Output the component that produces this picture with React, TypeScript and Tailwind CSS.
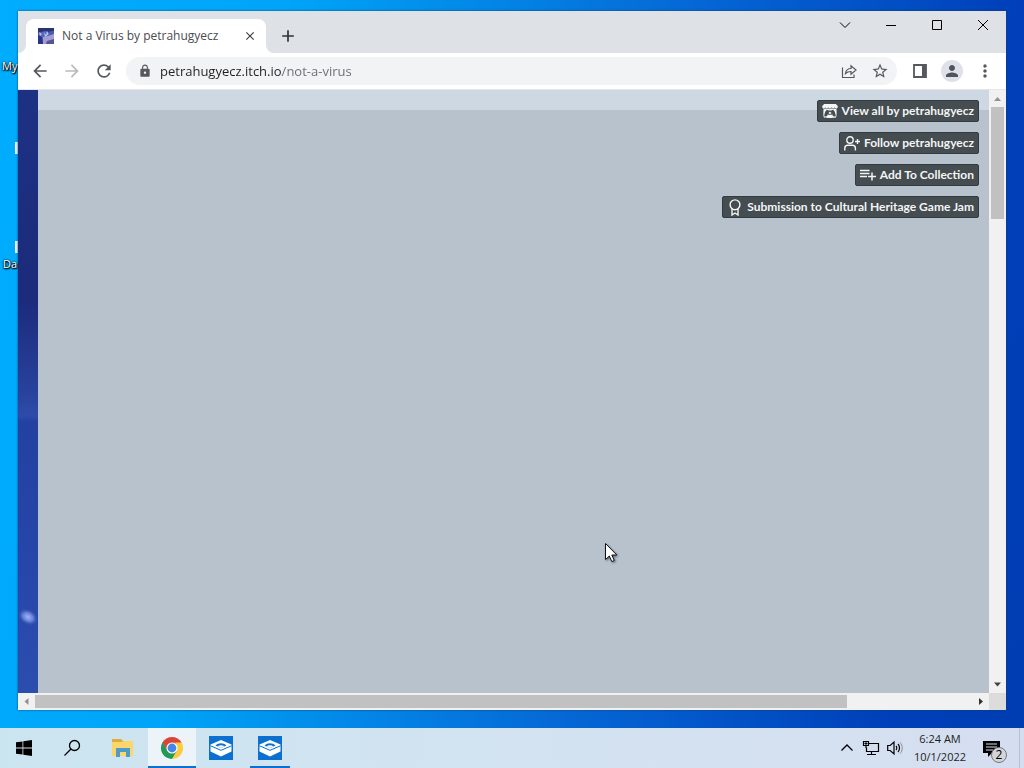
import type { ReactNode } from "react";
import { FaItchIo } from "react-icons/fa";
import { MdLock, MdStarBorder, MdMoreVert, MdPerson, MdArrowBack, MdArrowForward, MdRefresh, MdClose, MdAdd } from "react-icons/md";

const uiFont = "font-['Open_Sans','Noto_Sans',sans-serif]";

function FollowIcon() {
  return (
    <svg viewBox="0 0 16 15" className="h-[15px] w-4" fill="none" stroke="currentColor" strokeWidth="1.4" aria-hidden="true">
      <circle cx="6" cy="4" r="3.200" />
      <path d="M.8 14.500v-2.200c0-1.900 1.200-3 3-3h4.600c1.800 0 3 1.100 3 3v2.200M13.500 3v5M11 5.500h5" />
    </svg>
  );
}

function CollectIcon() {
  return (
    <svg viewBox="0 0 16 14" className="h-[14px] w-4" fill="none" stroke="currentColor" strokeWidth="1.500" aria-hidden="true">
      <path d="M0 2.500h9.500M0 5.500h9.500M0 8.500h7M12 4.500v8M8 8.500h8" />
    </svg>
  );
}

function RibbonIcon() {
  return (
    <svg viewBox="0 0 16 17" className="h-[17px] w-4" fill="none" stroke="currentColor" strokeWidth="1.400" aria-hidden="true">
      <circle cx="8" cy="5.800" r="4.900" />
      <path d="M5 9.800v6.200l3-2 3 2V9.800" />
    </svg>
  );
}

const pageActions: { label: string; icon: ReactNode }[] = [
  { label: "View all by petrahugyecz", icon: <FaItchIo size={16} /> },
  { label: "Follow petrahugyecz", icon: <FollowIcon /> },
  { label: "Add To Collection", icon: <CollectIcon /> },
  { label: "Submission to Cultural Heritage Game Jam", icon: <RibbonIcon /> },
];

function WindowButton({ label, children }: { label: string; children: ReactNode }) {
  return (
    <button aria-label={label} className="flex h-7 w-[46px] items-center justify-center text-black">
      <svg viewBox="0 0 12 12" className="size-3" fill="none" stroke="currentColor" aria-hidden="true">
        {children}
      </svg>
    </button>
  );
}

function TitleBar() {
  return (
    <header className="flex h-[42px] shrink-0 items-end justify-between bg-[#dee1e6]">
      <div className="flex h-full min-w-0 items-end">
        <div className="relative ml-2 flex h-[34px] w-[240px] items-center rounded-t-lg bg-white pl-3">
          <svg viewBox="0 0 8 8" className="absolute bottom-0 -left-2 size-2" aria-hidden="true">
            <path d="M0 8a8 8 0 0 0 8-8v8z" fill="white" />
          </svg>
          <svg viewBox="0 0 8 8" className="absolute -right-2 bottom-0 size-2" aria-hidden="true">
            <path d="M8 8a8 8 0 0 1-8-8v8z" fill="white" />
          </svg>
          <svg viewBox="0 0 16 16" className="size-4 shrink-0" aria-hidden="true">
            <path d="M0 0h16v16H0z" fill="#5d62b4" />
            <path d="M0 0h16v3l-5 1-4-1-7 2z" fill="#2a3474" />
            <path d="M0 7l4 2 1 7H0z" fill="#26358a" />
            <path d="M5 9l5-1 6-2v5l-6 5H5z" fill="#a59bd1" />
            <path d="M1 4l3 2-2 2zM6 4l2 3 1-4 2 3-4 3z" fill="#a5c8f5" />
            <path d="M10 4l5-1v3l-4 1z" fill="#4a5aa8" />
            <path d="M9 13l7-2v5H8z" fill="#535695" />
          </svg>
          <button role="tab" aria-selected="true" className="ml-2 flex-1 whitespace-nowrap text-left text-xs text-[#494c50]">
            Not a Virus by petrahugyecz
          </button>
          <button aria-label="Close tab" className="mr-2 flex size-4 items-center justify-center text-[#3c4043]">
            <MdClose size={14} />
          </button>
        </div>
        <button aria-label="New tab" className="ml-3 flex h-[34px] w-5 items-center justify-center text-[#303236]">
          <MdAdd size={20} />
        </button>
      </div>
      <div className="flex self-start">
        <WindowButton label="Search tabs"><path d="M1 3.500l5 5 5-5" /></WindowButton>
        <WindowButton label="Minimize"><path d="M1 6.500h10" /></WindowButton>
        <WindowButton label="Maximize"><path d="M1.500 1.500h9v9h-9z" /></WindowButton>
        <WindowButton label="Close window"><path d="M1 1l10 10M11 1L1 11" /></WindowButton>
      </div>
    </header>
  );
}

function ToolBar() {
  return (
    <nav className="flex h-[37px] shrink-0 items-center border-b border-[#e4e6e9] bg-white pr-[11px] pl-3 text-[#55585c]">
      <div className="flex gap-3">
        <button aria-label="Back"><MdArrowBack size={20} /></button>
        <button aria-label="Forward" className="text-[#b9bbbe]"><MdArrowForward size={20} /></button>
        <button aria-label="Reload"><MdRefresh size={20} /></button>
      </div>
      <div className="ml-3 flex h-7 flex-1 items-center rounded-full bg-[#f1f3f4] px-2">
        <MdLock size={14} className="mr-2 ml-1 shrink-0" />
        <input
          aria-label="Address"
          defaultValue="petrahugyecz.itch.io/not-a-virus"
          className="h-6 min-w-0 flex-1 bg-[linear-gradient(to_right,#202124_122px,#686b70_122px)] bg-clip-text text-[13px] text-transparent outline-none"
        />
        <button aria-label="Share this page">
          <svg viewBox="0 0 16 16" className="size-4" fill="none" stroke="currentColor" strokeWidth="1.200" aria-hidden="true">
            <path d="M1.500 4.500v10h11.500v-3M4.500 10.500c.5-3.500 2.500-5 5.500-5V2.800L15 7l-5 4.200V8.500C7.500 8.500 6 9 4.500 10.500z" />
          </svg>
        </button>
        <button aria-label="Bookmark this tab" className="ml-[14px]"><MdStarBorder size={18} /></button>
      </div>
      <button aria-label="Side panel" className="ml-4">
        <svg viewBox="0 0 14 14" className="h-[14px] w-[14px]" aria-hidden="true">
          <path d="M1 1h12v12H1z" fill="none" stroke="currentColor" strokeWidth="1.800" />
          <path d="M9 1h4v12H9z" fill="currentColor" />
        </svg>
      </button>
      <button aria-label="Profile" className="ml-[14px] flex size-[22px] items-center justify-center rounded-full bg-[#dfe1e8] text-[#50535e]">
        <MdPerson size={18} />
      </button>
      <button aria-label="Menu" className="ml-3"><MdMoreVert size={20} /></button>
    </nav>
  );
}

function Arrow({ d, color }: { d: string; color: string }) {
  return (
    <svg viewBox="0 0 17 17" className="size-[17px] shrink-0" aria-hidden="true">
      <path d={d} fill={color} />
    </svg>
  );
}

function PageView() {
  return (
    <div className="grid min-h-0 flex-1 grid-cols-[1fr_17px] grid-rows-[1fr_17px] bg-[#f1f1f1]">
      <main className="flex min-h-0 bg-[#b7c2cd]">
        <div className="flex w-5 shrink-0 flex-col bg-[linear-gradient(#1d3182,#1c2b7c_35%,#28429c_50%,#2f4ba9_54%,#2341a0_55%,#2746aa_80%,#2b4eae)]">
          <svg viewBox="0 0 20 40" className="mt-auto mb-14 h-10 w-5" aria-hidden="true">
            <defs>
              <radialGradient id="glow">
                <stop offset="0" stopColor="#a3b6fa" />
                <stop offset="0.500" stopColor="#7690e2" stopOpacity="0.800" />
                <stop offset="1" stopColor="#2746aa" stopOpacity="0" />
              </radialGradient>
            </defs>
            <ellipse cx="10" cy="20" rx="11" ry="8" fill="url(#glow)" transform="rotate(30 10 20)" />
          </svg>
        </div>
        <div className="flex-1 bg-[linear-gradient(#cdd8e3_20px,#b7c2cd_20px)]">
          <ul className="flex flex-col items-end gap-[10px] p-[10px]">
            {pageActions.map((action) => (
              <li key={action.label}>
                <a
                  href="#"
                  className="flex h-[22px] items-center gap-1 rounded-xs border border-[#303b42] bg-[#454d51] px-1 font-['Lato',sans-serif] text-xs font-bold whitespace-nowrap text-[#f3f5f6]"
                >
                  {action.icon}
                  {action.label}
                </a>
              </li>
            ))}
          </ul>
        </div>
      </main>
      <div className="flex flex-col">
        <Arrow d="M5 11l3.500-4 3.500 4z" color="#929292" />
        <div className="mx-[2px] h-[112px] bg-[#c1c1c1]" />
        <div className="flex-1" />
        <Arrow d="M5 6.500h7l-3.500 4z" color="#444" />
      </div>
      <div className="flex">
        <Arrow d="M10.500 5v7l-4-3.500z" color="#929292" />
        <div className="my-[2px] flex-[13] bg-[#c1c1c1]" />
        <div className="flex-[2]" />
        <Arrow d="M7 5l4 3.500-4 3.500z" color="#333" />
      </div>
      <div className="bg-[#dcdcdc]" />
    </div>
  );
}

function SandboxIcon() {
  return (
    <svg viewBox="0 0 24 24" className="size-6" aria-hidden="true">
      <path d="M0 0h24v24H0z" fill="#0b70cf" />
      <path d="M12 4l10.500 4.500v7L12 20.500 1.500 15.500v-7z" fill="#fff" />
      <path d="M1.500 9.800L12 14.300l10.500-4.500" fill="none" stroke="#0b70cf" strokeWidth="1" />
      <path d="M6.500 9.500c3.200-2.900 7.800-2.900 11 0L12 12z" fill="#0b70cf" />
      <path d="M8.500 10.300c2.200-1.400 4.800-1.400 7 0L12 12z" fill="#fff" />
    </svg>
  );
}

function ChromeIcon() {
  return (
    <svg viewBox="0 0 24 24" className="size-6" aria-hidden="true">
      <path d="M12 12L2.400 6.450A11.100 11.100 0 0 1 21.600 6.450z" fill="#dc4437" />
      <path d="M12 6.450h9.600A11.100 11.100 0 0 1 12 23.100l4.800-8.300z" fill="#fccc3d" />
      <path d="M2.400 6.450A11.100 11.100 0 0 0 12 23.100l4.800-8.300H7.200z" fill="#229a55" />
      <path d="M2.400 6.450l4.800 8.300L12 12l4-5.550z" fill="#dc4437" />
      <path d="M2.400 6.450l4.800 8.300 2 1.500L5 17z" fill="#229a55" />
      <circle cx="12" cy="12" r="5.550" fill="#fff" />
      <circle cx="12" cy="12" r="4.400" fill="#4586ea" />
    </svg>
  );
}

function FolderIcon() {
  return (
    <svg viewBox="0 0 22 20" className="h-5 w-[22px]" aria-hidden="true">
      <path d="M0 1h9l2 2h9v15H0z" fill="#e0ab39" />
      <path d="M0 4h10l2-1h9v15H0z" fill="#fbd66b" />
      <path d="M4 10h14v9h-4v-5H8v5H4z" fill="#4c9bc9" />
    </svg>
  );
}

function TaskBar() {
  return (
    <footer className="flex h-10 shrink-0 justify-between bg-[linear-gradient(to_right,#cbe5f0,#d3e3f1_50%,#d5def0)] text-black">
      <div className="flex">
        <button aria-label="Start" className="flex w-12 items-center justify-center">
          <svg viewBox="0 0 16 16" className="size-4" aria-hidden="true">
            <path d="M0 2.300l6.500-.9v6.100H0zM7.300 1.300L16 0v7.500H7.300zM0 8.400h6.500v6.200L0 13.700zM7.300 8.400H16V16l-8.700-1.300z" />
          </svg>
        </button>
        <button aria-label="Search" className="flex w-12 items-center justify-center">
          <svg viewBox="0 0 18 18" className="size-[18px]" fill="none" stroke="currentColor" strokeWidth="1.300" aria-hidden="true">
            <circle cx="11.500" cy="6.500" r="5" />
            <path d="M8 10l-6.500 6.500" />
          </svg>
        </button>
        <button aria-label="File Explorer" className="ml-[2px] flex w-[50px] items-center justify-center"><FolderIcon /></button>
        <button aria-label="Google Chrome" className="flex w-12 items-center justify-center bg-[#edf4f9] shadow-[inset_0_-2px_#0b70cf]"><ChromeIcon /></button>
        <button aria-label="Sandbox" className="flex w-[50px] items-center justify-center"><SandboxIcon /></button>
        <button aria-label="Sandbox window" className="ml-1 flex w-10 items-center justify-center shadow-[inset_0_-2px_#0b70cf]"><SandboxIcon /></button>
      </div>
      <div className="mr-1 flex items-center border-r border-[#b9c2d2] pr-[2px]">
        <button aria-label="Show hidden icons" className="flex w-6 justify-center">
          <svg viewBox="0 0 12 12" className="size-3" fill="none" stroke="currentColor" strokeWidth="1.300" aria-hidden="true"><path d="M.5 8.500L6 3l5.500 5.500" /></svg>
        </button>
        <button aria-label="Network" className="flex w-6 justify-center">
          <svg viewBox="0 0 18 16" className="h-4 w-[18px]" fill="none" stroke="currentColor" aria-hidden="true">
            <path d="M6.500 3.500h10v8H4.500v-4M5 14.500h9M9.500 11.500v3M1.500 1.500h5v4h-5zM4 5.500v2.500" strokeWidth="1.200" />
            <path d="M3 3h2v1H3z" fill="currentColor" />
          </svg>
        </button>
        <button aria-label="Volume" className="flex w-6 justify-center">
          <svg viewBox="0 0 16 16" className="size-4" fill="none" stroke="currentColor" aria-hidden="true">
            <path d="M.7 5.500h2.500L7 2v12l-3.800-3.500H.7zM9 6c1 1 1 3 0 4M11 4c2 2 2 6 0 8" strokeWidth="1.200" />
            <path d="M13 2.300c3 3 3 8.400 0 11.400" stroke="#87919c" />
          </svg>
        </button>
        <time dateTime="2022-10-01T06:24" className="mx-[6px] flex w-[54px] flex-col items-center text-[11px] leading-[18px] whitespace-nowrap text-[#1c1f22]">
          <span>6:24 AM</span>
          <span>10/1/2022</span>
        </time>
        <button aria-label="Notifications" className="relative ml-2 flex h-10 w-9 items-center pl-[2px]">
          <svg viewBox="0 0 17 17" className="size-[17px]" aria-hidden="true">
            <path d="M0 1h17v12H9l-4 4v-4H0z" />
            <path d="M3 4h11M3 7h11M3 10h7" stroke="#d5def0" strokeWidth="1.200" />
          </svg>
          <span className="absolute top-[19px] left-[10px] flex size-4 items-center justify-center rounded-full border border-[#74777b] bg-[#d3d5d9] text-xs leading-none">2</span>
        </button>
      </div>
    </footer>
  );
}

function DesktopIcons() {
  return (
    <ul className="absolute top-14 left-0 w-[18px] text-[11px] leading-5 text-white [text-shadow:0_1px_2px_#000,1px_1px_1px_#000,0_0_2px_#000]">
      <li className="pl-[2px]">My</li>
      <li className="flex h-[178px] flex-col items-end justify-end gap-[87px] pb-[1px]">
        <span className="h-3 w-[3px] bg-[#eaf5ff]" />
        <span className="h-3 w-[3px] bg-[#eaf5ff]" />
      </li>
      <li className="pl-[3px]">Da</li>
    </ul>
  );
}

export default function App() {
  return (
    <div className={`relative flex h-screen flex-col overflow-hidden bg-[linear-gradient(100deg,#00adff,#00a4f8_25%,#0567d5_60%,#003fb9_88%,#003db2)] ${uiFont}`}>
      <DesktopIcons />
      <div className="relative flex min-h-0 flex-1 px-[18px] pt-[11px] pb-[18px]">
        <section aria-label="Browser" className="flex min-w-0 flex-1 flex-col shadow-[0_0_2px_#12406d]">
          <TitleBar />
          <ToolBar />
          <PageView />
        </section>
      </div>
      <TaskBar />
      <svg viewBox="0 0 14 22" className="pointer-events-none absolute top-[542px] left-[604px] h-[22px] w-[14px] drop-shadow-[1px_1px_1px_#00000080]" aria-hidden="true">
        <path d="M1.500 1.500v16l3.800-3.500 2.500 5.500 2.500-1-2.500-5.500h5z" fill="#fff" stroke="#111" />
      </svg>
    </div>
  );
}
